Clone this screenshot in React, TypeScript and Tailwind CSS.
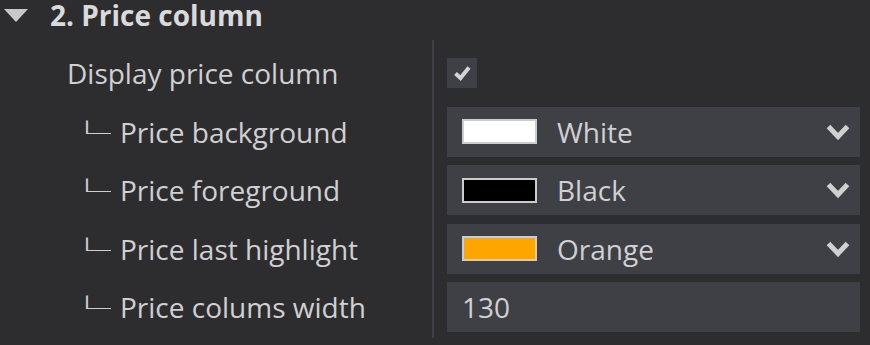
import React from "react";

type Row =
    | { kind: "color"; label: string; name: string; swatch: string }
    | { kind: "number"; label: string; value: string };

const rows: Row[] = [
    { kind: "color", label: "Price background", name: "White", swatch: "bg-white" },
    { kind: "color", label: "Price foreground", name: "Black", swatch: "bg-black" },
    { kind: "color", label: "Price last highlight", name: "Orange", swatch: "bg-[#ffa500]" },
    { kind: "number", label: "Price colums width", value: "130" },
];

const Chevron = () => (
    <svg width="24" height="18" viewBox="0 0 24 18" className="shrink-0">
        <path d="M2.5 3.5 L12 13.5 L21.5 3.5" fill="none" stroke="#d0d0d0" strokeWidth="5" />
    </svg>
);

const SubLabel: React.FC<{ text: string }> = ({ text }) => (
    <div className="flex h-[58.5px] items-center pl-[75px] leading-[58.5px]">
        <span className="inline-block w-[24px] scale-x-[2] text-[24px] font-['Noto_Sans_CJK_JP',sans-serif] font-medium text-[#cfcfcf]">
            └
        </span>
        <span className="ml-[21px]">{text}</span>
    </div>
);

export default function App() {
    return (
        <div className="h-[345px] w-[870px] overflow-hidden bg-[#2d2d30] font-['Open_Sans',sans-serif] text-[28px] text-[#d0d0d0]">
            {/* section header */}
            <div className="flex h-[30px] items-center pl-[4px]">
                <svg width="24" height="13" viewBox="0 0 24 13">
                    <polygon points="0,0 24,0 12,13" fill="#c8c8c8" />
                </svg>
                <span className="ml-[22px] text-[28px] font-bold leading-[30px] text-[#dadada]">
                    2. Price column
                </span>
            </div>

            <div className="mt-[10px] flex">
                <div className="w-[432px] pt-[4px] pb-[1.5px]">
                    <div className="flex h-[58.5px] items-center pl-[67px] leading-[58.5px]">
                        Display price column
                    </div>
                    {rows.map((r) => (
                        <SubLabel key={r.label} text={r.label} />
                    ))}
                </div>

                <div className="flex-1 border-l-2 border-[#3f3f46] pt-[4px] pb-[1.5px] pl-[13px] pr-[10px]">
                    <div className="flex h-[58.5px] items-center">
                        <div className="flex h-[30px] w-[30px] items-center justify-center bg-[#3f3f46]">
                            <svg width="17" height="16" viewBox="0 0 17 16">
                                <path d="M1.5 8.5 L6.5 13 L15 2.5" fill="none" stroke="#d4d4d4" strokeWidth="4" />
                            </svg>
                        </div>
                    </div>
                    {rows.map((r) => (
                        <div key={r.label} className="flex h-[58.5px] items-center">
                            {r.kind === "color" ? (
                                <div className="flex h-[50px] w-full items-center bg-[#3f3f46] pl-[15px] pr-[10px]">
                                    <span className={`h-[25px] w-[75px] border-2 border-[#cccccc] ${r.swatch}`} />
                                    <span className="ml-[20px] flex-1">{r.name}</span>
                                    <Chevron />
                                </div>
                            ) : (
                                <div className="flex h-[50px] w-full items-center bg-[#3f3f46] pl-[15px]">
                                    {r.value}
                                </div>
                            )}
                        </div>
                    ))}
                </div>
            </div>
        </div>
    );
}
